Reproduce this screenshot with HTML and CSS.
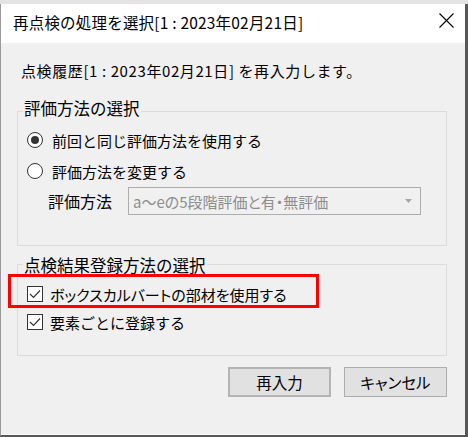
FILE: index.html
```html
<!DOCTYPE html>
<html lang="ja">
<head>
    <meta charset="UTF-8">
    <meta name="viewport" content="width=device-width, initial-scale=1.0">
    <title>再点検の処理を選択</title>
    <link rel="stylesheet" href="styles.css">
</head>
<body>
    <div class="window">
        <div class="titlebar">
            <span class="title">再点検の処理を選択[1 : 2023年02月21日]</span>
            <svg class="close" width="15" height="15" viewBox="0 0 15 15">
                <path d="M0.5 0.5 L14.5 14.5 M14.5 0.5 L0.5 14.5" stroke="#000" stroke-width="1.1" fill="none"/>
            </svg>
        </div>
        <div class="client">
            <p class="message">点検履歴[1 : 2023年02月21日] を再入力します。</p>

            <fieldset class="group group-eval">
                <legend>評価方法の選択</legend>
                <div class="option first">
                    <span class="radio checked"></span>
                    <span>前回と同じ評価方法を使用する</span>
                </div>
                <div class="option">
                    <span class="radio"></span>
                    <span>評価方法を変更する</span>
                </div>
                <div class="field">
                    <span class="field-label">評価方法</span>
                    <div class="combo disabled">
                        <span class="kana">a〜eの5段階評価と有・無評価</span>
                        <svg width="7" height="4" viewBox="0 0 7 4"><path d="M0 0 L7 0 L3.5 4 Z" fill="#a6a6a6"/></svg>
                    </div>
                </div>
            </fieldset>

            <fieldset class="group group-register">
                <legend>点検結果登録方法の選択</legend>
                <div class="option check-row first">
                    <span class="checkbox">
                        <svg width="12" height="10" viewBox="0 0 12 10"><path d="M1 5 L4.5 8.5 L11 1.5" stroke="#333" stroke-width="1.2" fill="none"/></svg>
                    </span>
                    <span class="kana">ボックスカルバートの部材を使用する</span>
                </div>
                <div class="option check-row">
                    <span class="checkbox">
                        <svg width="12" height="10" viewBox="0 0 12 10"><path d="M1 5 L4.5 8.5 L11 1.5" stroke="#333" stroke-width="1.2" fill="none"/></svg>
                    </span>
                    <span>要素ごとに登録する</span>
                </div>
            </fieldset>

            <div class="buttons">
                <button class="btn btn-default">再入力</button>
                <button class="btn kana">キャンセル</button>
            </div>
        </div>
        <div class="highlight"></div>
    </div>
</body>
</html>
```

FILE: styles.css
```css
body {
    margin: 0;
    padding-top: 4px;
    background: #e3e3e3;
    font-family: "Noto Sans CJK JP", sans-serif;
    color: #000;
}
.kana {
    font-feature-settings: "palt";
}
.window {
    position: relative;
    width: 464px;
    border-left: 1px solid #9a9a9a;
    border-right: 3px solid #575757;
    border-bottom: 2px solid #575757;
}
.titlebar {
    height: 39px;
    box-sizing: border-box;
    padding: 8px 11px 0 12px;
    background: #ffffff;
    display: flex;
    justify-content: space-between;
    align-items: flex-start;
}
.title {
    font-size: 15.5px;
    line-height: 20px;
    letter-spacing: 0.2px;
}
.close {
    margin-top: 1px;
}
.client {
    height: 392px;
    box-sizing: border-box;
    background: #f0f0f0;
    border-bottom: 1px solid #fafafa;
    padding-left: 16px;
    display: flex;
    flex-direction: column;
}
.message {
    margin: 18px 0 0 4px;
    font-size: 15px;
    line-height: 20px;
    letter-spacing: 0.6px;
}
.group {
    width: 430px;
    box-sizing: border-box;
    margin: 0;
    padding: 0;
    border: 1px solid #dcdcdc;
}
.group legend {
    margin-left: 5px;
    padding: 0 1px 6px 1px;
    font-size: 16.5px;
    line-height: 20px;
}
.group-eval {
    margin-top: 17px;
    padding-bottom: 30px;
}
.group-register {
    margin-top: 5px;
    padding-bottom: 21px;
}
.group-register legend {
    padding-top: 4px;
    padding-bottom: 2px;
}
.option {
    height: 24px;
    margin: 7px 0 0 9px;
    display: flex;
    align-items: center;
    gap: 9px;
    font-size: 15px;
}
.option.first {
    margin-top: 4px;
}
.check-row {
    margin-top: 4px;
    gap: 7px;
}
.check-row.first {
    margin-top: 5px;
}
.radio {
    width: 16px;
    height: 16px;
    box-sizing: border-box;
    border: 1px solid #333;
    border-radius: 50%;
    background: #fff;
    display: flex;
    align-items: center;
    justify-content: center;
}
.radio.checked::after {
    content: "";
    width: 8px;
    height: 8px;
    border-radius: 50%;
    background: #333;
}
.checkbox {
    width: 16px;
    height: 16px;
    box-sizing: border-box;
    border: 1px solid #333;
    background: #fff;
    display: flex;
    align-items: center;
    justify-content: center;
}
.field {
    margin: 4px 0 0 30px;
    height: 28px;
    display: flex;
    align-items: center;
}
.field-label {
    width: 64px;
    font-size: 16px;
}
.combo {
    width: 293px;
    height: 28px;
    box-sizing: border-box;
    margin-left: 16px;
    padding: 0 8px 0 4px;
    border: 1px solid #adadad;
    display: flex;
    align-items: center;
    justify-content: space-between;
    font-size: 15px;
}
.combo.disabled {
    background: #f0f0f0;
    color: #8d8d8d;
}
.buttons {
    width: 430px;
    margin-top: 11px;
    display: flex;
    justify-content: flex-end;
    gap: 13px;
}
.btn {
    width: 103px;
    height: 30px;
    padding: 0;
    border: 1px solid #adadad;
    background: #e1e1e1;
    font-family: inherit;
    font-size: 15.5px;
    color: #000;
}
.btn.kana {
    font-feature-settings: "palt";
}
.btn-default {
    border-width: 2px;
    border-color: #b4b4b4;
}
.highlight {
    position: absolute;
    left: 7px;
    top: 270px;
    width: 311px;
    height: 34px;
    box-sizing: border-box;
    border: 3px solid #ff0000;
}
```
